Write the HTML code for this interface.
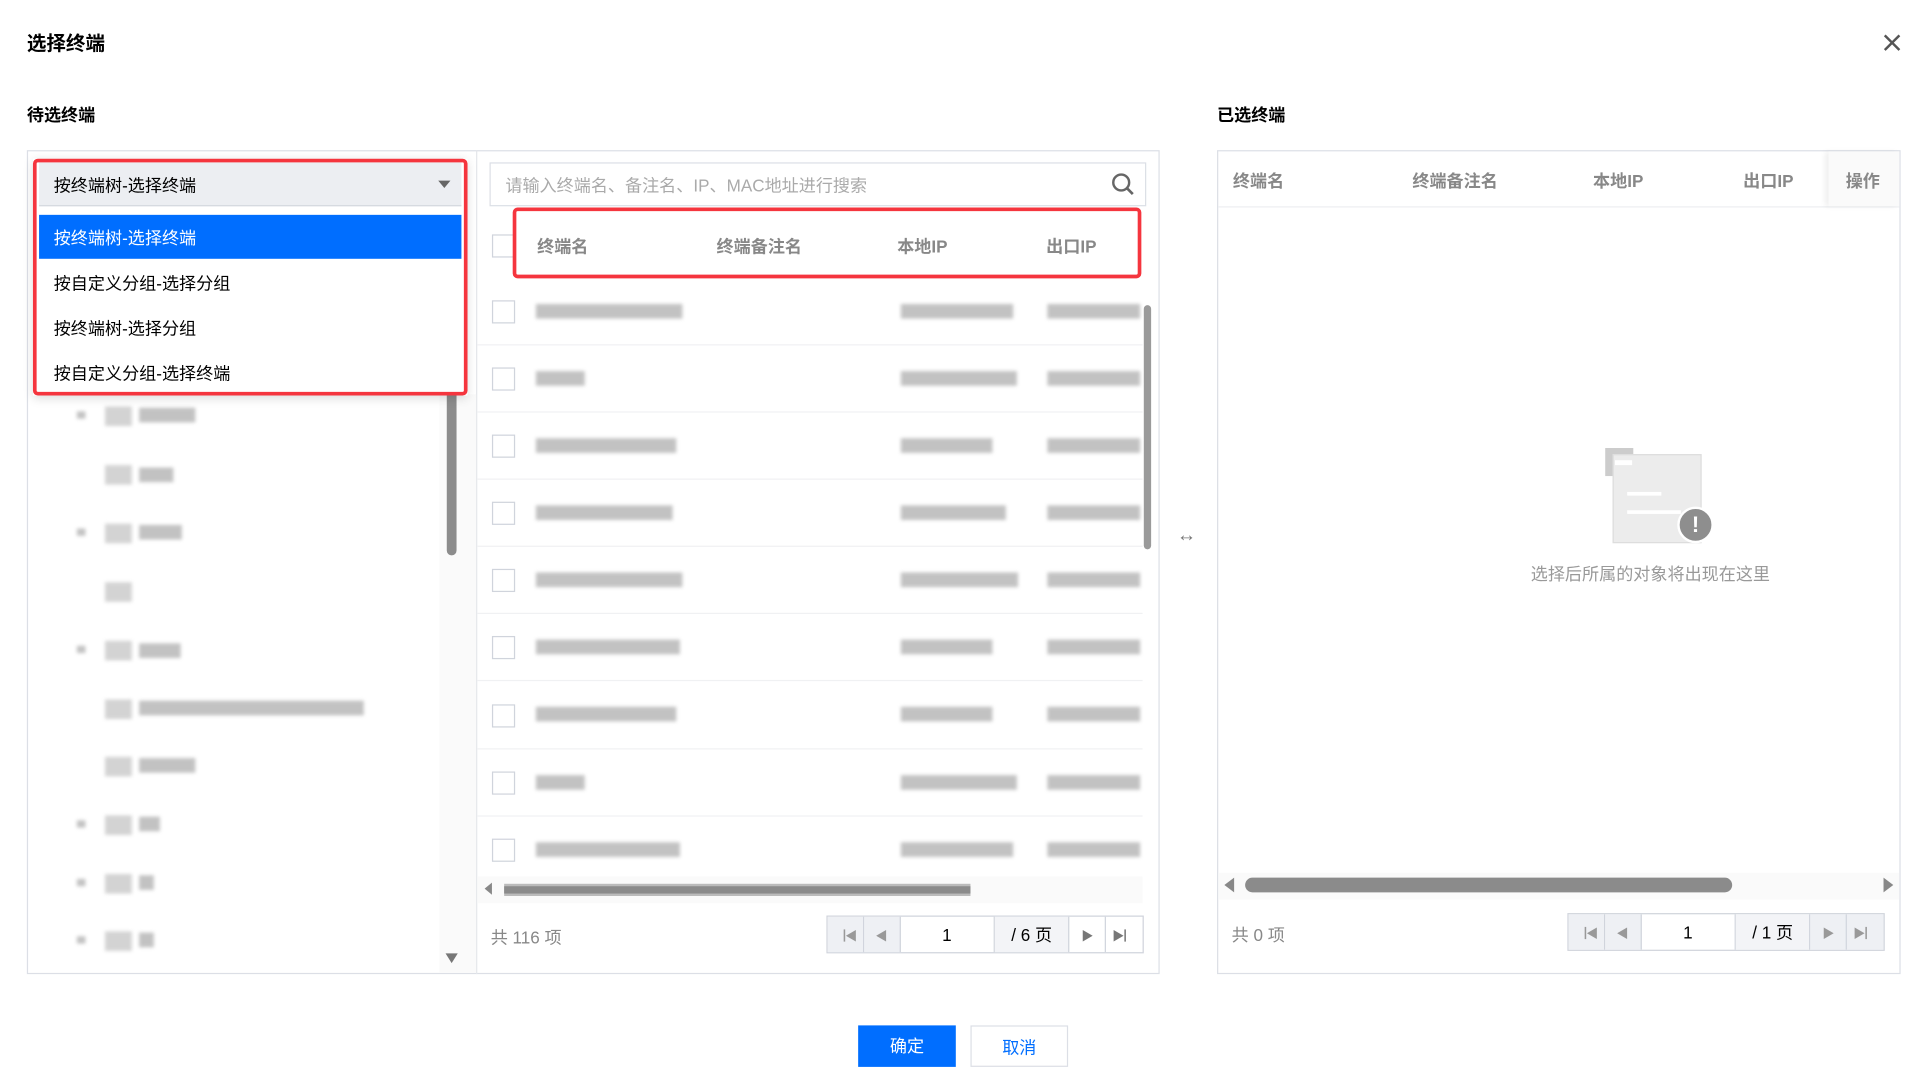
<!DOCTYPE html>
<html><head><meta charset="utf-8"><style>
*{box-sizing:border-box;margin:0;padding:0}
html,body{width:1914px;height:1065px;overflow:hidden;background:#fff}
#s{position:absolute;left:0;top:0;width:1568px;height:872px;transform:scale(1.2207);transform-origin:0 0;font-family:"Liberation Sans","Noto Sans CJK SC",sans-serif;color:#000}
.a{position:absolute}
.t{font-size:14px;white-space:nowrap}
.h{font-weight:bold;color:#888;font-size:14px;position:absolute;white-space:nowrap}
.cb{position:absolute;width:19px;height:19px;border:1px solid #d0d4dc;background:#fff}
.bl{position:absolute;height:12px;background:#b8b8b8;filter:blur(1.5px);opacity:.85}
.ln{position:absolute;height:1px;background:#f0f1f3}
.pg{position:absolute;height:31px;border:1px solid #d0d4dc;display:flex;font-size:14px}
.pg div{border-right:1px solid #d0d4dc;display:flex;align-items:center;justify-content:center;color:#999;font-size:10px}
.pg div:last-child{border-right:none}
</style></head><body><div id="s">
<div class="a" style="left:22px;top:22px;font-size:16px;font-weight:bold">选择终端</div>
<svg class="a" style="left:1542px;top:27px" width="16" height="16"><path d="M2 2L14 14M14 2L2 14" stroke="#555" stroke-width="2"/></svg>
<div class="a" style="left:22px;top:84px;font-size:14px;font-weight:bold">待选终端</div>
<div class="a" style="left:997px;top:84px;font-size:14px;font-weight:bold">已选终端</div>

<!-- left panel -->
<div class="a" style="left:22px;top:123px;width:928px;height:675px;border:1px solid #dcdfe6"></div>
<div class="a" style="left:390px;top:123px;width:1px;height:675px;background:#e4e6ea"></div>
<div class="a" style="left:360px;top:323px;width:30px;height:474px;background:#fafafa"></div>
<div class="a" style="left:366px;top:320px;width:8px;height:135px;background:#8c8c8c;border-radius:4px"></div>
<div class="a" style="left:365px;top:781px;width:0;height:0;border-left:5px solid transparent;border-right:5px solid transparent;border-top:8px solid #777"></div>
<!-- tree rows -->
<div id="tree"></div>

<!-- search -->
<div class="a" style="left:401px;top:133px;width:538px;height:36px;border:1px solid #dcdfe6"></div>
<div class="a t" style="left:414px;top:142px;color:#aaa">请输入终端名、备注名、IP、MAC地址进行搜索</div>
<svg class="a" style="left:910px;top:141px" width="20" height="20"><circle cx="8.5" cy="8.5" r="6.5" fill="none" stroke="#666" stroke-width="2"/><path d="M13 13L18 18" stroke="#666" stroke-width="2.2"/></svg>
<div class="cb" style="left:403px;top:192px"></div>
<div class="h" style="left:440px;top:192px">终端名</div>
<div class="h" style="left:587px;top:192px">终端备注名</div>
<div class="h" style="left:735px;top:192px">本地IP</div>
<div class="h" style="left:857px;top:192px">出口IP</div>
<div class="a" style="left:420px;top:170px;width:515px;height:58px;border:3px solid #f5353e;border-radius:4px"></div>
<div id="rows"></div>
<div class="a" style="left:937px;top:250px;width:6px;height:200px;background:#9a9a9a;border-radius:3px"></div>
<div class="a" style="left:391px;top:718px;width:545px;height:22px;background:#fafafa"></div>
<div class="a" style="left:413px;top:724px;width:382px;height:10px;background:#bbb"></div>
<div class="a" style="left:413px;top:726px;width:382px;height:6px;background:#8b8b8b"></div>
<div class="a" style="left:397px;top:723px;width:0;height:0;border-top:5px solid transparent;border-bottom:5px solid transparent;border-right:6px solid #888"></div>
<div class="a t" style="left:402px;top:758px;color:#888">共 116 项</div>
<div class="pg" style="left:677px;top:750px;width:260px">
<div style="width:30px;background:#eef0f4">▕◀</div><div style="width:30px;background:#eef0f4">◀</div><div style="width:78px;color:#000;font-size:14px">1</div><div style="width:62px;color:#000;font-size:14px;background:#f3f4f7">/ 6 页</div><div style="width:30px;color:#777">▶</div><div style="width:30px;color:#777">▶▏</div></div>

<!-- dropdown -->
<div class="a" style="left:27px;top:130px;width:356px;height:194px;background:#fff;box-shadow:0 2px 8px rgba(0,0,0,.15)"></div>
<div class="a" style="left:32px;top:133px;width:346px;height:36px;background:#eceef2;border-bottom:1px solid #d5d8de"></div>
<div class="a t" style="left:44px;top:142px">按终端树-选择终端</div>
<div class="a" style="left:359px;top:148px;border-left:5px solid transparent;border-right:5px solid transparent;border-top:6px solid #666"></div>
<div class="a" style="left:32px;top:176px;width:346px;height:36px;background:#006eff"></div>
<div class="a t" style="left:44px;top:185px;color:#fff">按终端树-选择终端</div>
<div class="a t" style="left:44px;top:222px">按自定义分组-选择分组</div>
<div class="a t" style="left:44px;top:259px">按终端树-选择分组</div>
<div class="a t" style="left:44px;top:296px">按自定义分组-选择终端</div>
<div class="a" style="left:27px;top:130px;width:356px;height:194px;border:3px solid #f5353e;border-radius:4px"></div>

<div class="a" style="left:964px;top:430px;font-size:16px;color:#777">↔</div>

<!-- right panel -->
<div class="a" style="left:997px;top:123px;width:560px;height:675px;border:1px solid #dcdfe6"></div>
<div class="a" style="left:998px;top:169px;width:558px;height:1px;background:#eceef1"></div>
<div class="a" style="left:1498px;top:124px;width:58px;height:45px;background:#fafafa;box-shadow:-3px 0 4px rgba(0,0,0,.06)"></div>
<div class="h" style="left:1010px;top:138px">终端名</div>
<div class="h" style="left:1157px;top:138px">终端备注名</div>
<div class="h" style="left:1305px;top:138px">本地IP</div>
<div class="h" style="left:1428px;top:138px">出口IP</div>
<div class="h" style="left:1512px;top:138px">操作</div>
<div class="a" style="left:1315px;top:367px;width:23px;height:23px;background:#ccc"></div>
<div class="a" style="left:1321px;top:372px;width:73px;height:73px;background:#ececec;border:1px solid #ddd"></div>
<div class="a" style="left:1323px;top:377px;width:14px;height:4px;background:#fff"></div>
<div class="a" style="left:1333px;top:403px;width:28px;height:3px;background:#fff"></div>
<div class="a" style="left:1333px;top:418px;width:44px;height:3px;background:#fff"></div>
<div class="a" style="left:1374px;top:415px;width:30px;height:30px;border-radius:50%;background:#8e8e8e;border:2px solid #fff;color:#fff;font-weight:bold;font-size:18px;text-align:center;line-height:26px">!</div>
<div class="a t" style="left:1254px;top:460px;color:#999">选择后所属的对象将出现在这里</div>
<div class="a" style="left:998px;top:715px;width:558px;height:22px;background:#fafafa"></div>
<div class="a" style="left:1020px;top:719px;width:399px;height:12px;background:#8b8b8b;border-radius:6px"></div>
<div class="a" style="left:1003px;top:719px;border-top:6px solid transparent;border-bottom:6px solid transparent;border-right:8px solid #888"></div>
<div class="a" style="left:1543px;top:719px;border-top:6px solid transparent;border-bottom:6px solid transparent;border-left:8px solid #888"></div>
<div class="a t" style="left:1009px;top:756px;color:#888">共 0 项</div>
<div class="pg" style="left:1284px;top:748px;width:260px">
<div style="width:30px;background:#eef0f4">▕◀</div><div style="width:30px;background:#eef0f4">◀</div><div style="width:78px;color:#000;font-size:14px">1</div><div style="width:62px;color:#000;font-size:14px;background:#f3f4f7">/ 1 页</div><div style="width:30px;background:#eef0f4">▶</div><div style="width:30px;background:#eef0f4">▶▏</div></div>

<div class="a" style="left:703px;top:840px;width:80px;height:34px;background:#006eff;color:#fff;font-size:14px;text-align:center;line-height:34px">确定</div>
<div class="a" style="left:795px;top:840px;width:80px;height:34px;border:1px solid #dcdfe6;color:#006eff;font-size:14px;text-align:center;line-height:34px">取消</div>

<div class="bl" style="left:439px;top:249px;width:120px"></div><div class="bl" style="left:738px;top:249px;width:92px"></div><div class="bl" style="left:858px;top:249px;width:76px"></div>
<div class="bl" style="left:439px;top:304px;width:40px"></div><div class="bl" style="left:738px;top:304px;width:95px"></div><div class="bl" style="left:858px;top:304px;width:76px"></div>
<div class="bl" style="left:439px;top:359px;width:115px"></div><div class="bl" style="left:738px;top:359px;width:75px"></div><div class="bl" style="left:858px;top:359px;width:76px"></div>
<div class="bl" style="left:439px;top:414px;width:112px"></div><div class="bl" style="left:738px;top:414px;width:86px"></div><div class="bl" style="left:858px;top:414px;width:76px"></div>
<div class="bl" style="left:439px;top:469px;width:120px"></div><div class="bl" style="left:738px;top:469px;width:96px"></div><div class="bl" style="left:858px;top:469px;width:76px"></div>
<div class="bl" style="left:439px;top:524px;width:118px"></div><div class="bl" style="left:738px;top:524px;width:75px"></div><div class="bl" style="left:858px;top:524px;width:76px"></div>
<div class="bl" style="left:439px;top:579px;width:115px"></div><div class="bl" style="left:738px;top:579px;width:75px"></div><div class="bl" style="left:858px;top:579px;width:76px"></div>
<div class="bl" style="left:439px;top:635px;width:40px"></div><div class="bl" style="left:738px;top:635px;width:95px"></div><div class="bl" style="left:858px;top:635px;width:76px"></div>
<div class="bl" style="left:439px;top:690px;width:118px"></div><div class="bl" style="left:738px;top:690px;width:92px"></div><div class="bl" style="left:858px;top:690px;width:76px"></div>
<div class="cb" style="left:403px;top:246px"></div><div class="cb" style="left:403px;top:301px"></div><div class="cb" style="left:403px;top:356px"></div><div class="cb" style="left:403px;top:411px"></div><div class="cb" style="left:403px;top:466px"></div><div class="cb" style="left:403px;top:521px"></div><div class="cb" style="left:403px;top:577px"></div><div class="cb" style="left:403px;top:632px"></div><div class="cb" style="left:403px;top:687px"></div>
<div class="ln" style="left:391px;top:282px;width:545px"></div><div class="ln" style="left:391px;top:337px;width:545px"></div><div class="ln" style="left:391px;top:392px;width:545px"></div><div class="ln" style="left:391px;top:447px;width:545px"></div><div class="ln" style="left:391px;top:502px;width:545px"></div><div class="ln" style="left:391px;top:557px;width:545px"></div><div class="ln" style="left:391px;top:613px;width:545px"></div><div class="ln" style="left:391px;top:668px;width:545px"></div>

<div class="bl" style="left:86px;top:333px;width:22px;height:16px;background:#ccc"></div><div class="bl" style="left:114px;top:334px;width:46px"></div><div class="bl" style="left:63px;top:337px;width:7px;height:6px"></div>
<div class="bl" style="left:86px;top:381px;width:22px;height:16px;background:#ccc"></div><div class="bl" style="left:114px;top:383px;width:28px"></div>
<div class="bl" style="left:86px;top:429px;width:22px;height:16px;background:#ccc"></div><div class="bl" style="left:114px;top:430px;width:35px"></div><div class="bl" style="left:63px;top:433px;width:7px;height:6px"></div>
<div class="bl" style="left:86px;top:477px;width:22px;height:16px;background:#ccc"></div>
<div class="bl" style="left:86px;top:525px;width:22px;height:16px;background:#ccc"></div><div class="bl" style="left:114px;top:527px;width:34px"></div><div class="bl" style="left:63px;top:529px;width:7px;height:6px"></div>
<div class="bl" style="left:86px;top:573px;width:22px;height:16px;background:#ccc"></div><div class="bl" style="left:114px;top:574px;width:184px"></div>
<div class="bl" style="left:86px;top:620px;width:22px;height:16px;background:#ccc"></div><div class="bl" style="left:114px;top:621px;width:46px"></div>
<div class="bl" style="left:86px;top:668px;width:22px;height:16px;background:#ccc"></div><div class="bl" style="left:114px;top:669px;width:17px"></div><div class="bl" style="left:63px;top:672px;width:7px;height:6px"></div>
<div class="bl" style="left:86px;top:716px;width:22px;height:16px;background:#ccc"></div><div class="bl" style="left:114px;top:717px;width:12px"></div><div class="bl" style="left:63px;top:720px;width:7px;height:6px"></div>
<div class="bl" style="left:86px;top:763px;width:22px;height:16px;background:#ccc"></div><div class="bl" style="left:114px;top:764px;width:12px"></div><div class="bl" style="left:63px;top:767px;width:7px;height:6px"></div>
</div></body></html>
